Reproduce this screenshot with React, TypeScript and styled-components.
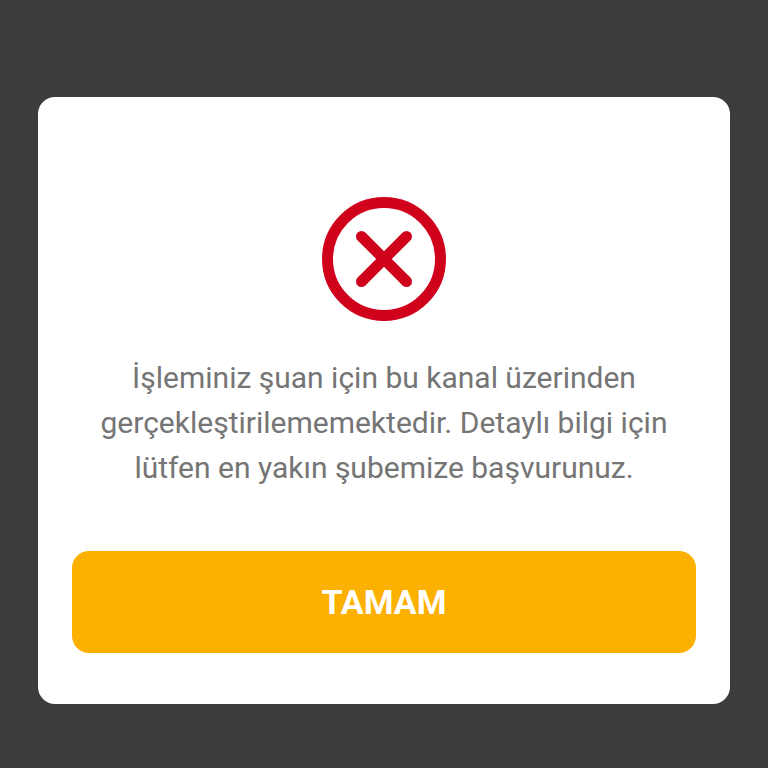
import React from "react";
import styled, { createGlobalStyle } from "styled-components";

const GlobalStyle = createGlobalStyle`
  *, *::before, *::after { box-sizing: border-box; }
  body {
    margin: 0;
    background: #3c3c3c;
    font-family: Roboto, "Noto Sans", sans-serif;
  }
`;

const Backdrop = styled.main`
  min-height: 100vh;
  padding: 97px 38px 64px;
`;

const Dialog = styled.section`
  display: flex;
  flex-direction: column;
  align-items: center;
  padding: 100px 34px 51px;
  border-radius: 17px;
  background: #ffffff;
`;

const ErrorIcon = styled.svg`
  display: block;
  width: 124px;
  height: 124px;
`;

const Message = styled.p`
  max-width: 600px;
  margin: 34px 0 61px;
  color: #757575;
  font-size: 30px;
  line-height: 45px;
  text-align: center;
`;

const ConfirmButton = styled.button`
  width: 100%;
  height: 102px;
  padding: 0;
  border: 0;
  border-radius: 17px;
  background: #fcb100;
  color: #ffffff;
  font: 700 34px/40px Roboto, "Noto Sans", sans-serif;
  cursor: pointer;
`;

export default function App() {
  return (
    <>
      <GlobalStyle />
      <Backdrop>
        <Dialog role="alertdialog" aria-modal="true" aria-describedby="dialog-message">
          <ErrorIcon viewBox="0 0 124 124" fill="none" stroke="#d0021b" aria-hidden="true">
            <circle cx="62" cy="62" r="56.5" strokeWidth="11" />
            <path d="M39.5 39.5 84.5 84.5M84.5 39.5 39.5 84.5" strokeWidth="11" strokeLinecap="round" />
          </ErrorIcon>
          <Message id="dialog-message">
            İşleminiz şuan için bu kanal üzerinden gerçekleştirilememektedir. Detaylı bilgi için lütfen en yakın şubemize başvurunuz.
          </Message>
          <ConfirmButton type="button">TAMAM</ConfirmButton>
        </Dialog>
      </Backdrop>
    </>
  );
}
